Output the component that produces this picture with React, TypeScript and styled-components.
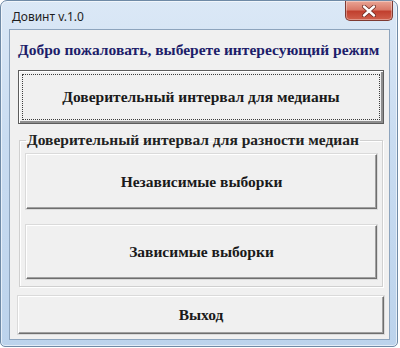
import styled, { createGlobalStyle, css } from "styled-components";

const GlobalStyle = createGlobalStyle`
  html, body {
    margin: 0;
    padding: 0;
    background: #ffffff;
  }
  * {
    box-sizing: border-box;
  }
`;

const Window = styled.div`
  width: 398px;
  height: 347px;
  display: flex;
  flex-direction: column;
  border: 1px solid #6f8aa6;
  border-radius: 7px 7px 5px 5px;
  background: linear-gradient(180deg, #dbe8f6 0%, #c9dcf1 40%, #bcd3ec 100%);
  box-shadow: inset 0 0 0 1px rgba(255, 255, 255, 0.6);
`;

const TitleBar = styled.div`
  height: 28px;
  flex-shrink: 0;
  display: flex;
  align-items: flex-start;
  justify-content: space-between;
  padding: 0 4px 0 11px;
`;

const Title = styled.span`
  margin-top: 7px;
  font-family: "Noto Sans", "Open Sans", sans-serif;
  font-size: 12px;
  color: #1e1e1e;
`;

const CloseButton = styled.div`
  width: 48px;
  height: 20px;
  display: flex;
  align-items: center;
  justify-content: center;
  border: 1px solid #7e3a32;
  border-top: none;
  border-radius: 0 0 5px 5px;
  background: linear-gradient(180deg, #e9a595 0%, #d97a69 45%, #c1402f 55%, #d0604c 100%);
  box-shadow: inset 0 0 0 1px rgba(255, 255, 255, 0.35);
`;

const Client = styled.div`
  flex: 1;
  margin: 0 7px 6px 8px;
  border: 1px solid #8da4bd;
  background: #f0f0f0;
  padding: 0 5px 0 8px;
  display: flex;
  flex-direction: column;
`;

const serif = css`
  font-family: "Liberation Serif", "Times New Roman", serif;
  font-weight: bold;
  font-size: 15.5px;
`;

const Heading = styled.div`
  ${serif}
  margin-top: 10px;
  height: 20px;
  line-height: 20px;
  color: #1d1d6a;
  white-space: nowrap;
`;

const Button = styled.button<{ $default?: boolean; $height: number }>`
  ${serif}
  position: relative;
  width: 100%;
  height: ${(p) => p.$height}px;
  flex-shrink: 0;
  margin: 0;
  padding: 0;
  background: #f0f0f0;
  border: 1px solid;
  border-color: #ffffff #6e6e6e #6e6e6e #ffffff;
  box-shadow: inset -1px -1px 0 #a0a0a0, 0 0 0 1px #dadada;
  color: #1a1a1a;
  cursor: pointer;

  ${(p) =>
    p.$default &&
    css`
      border-color: #5c5c5c;
      box-shadow: inset 1px 1px 0 #ffffff, inset -2px -2px 0 #8e8e8e;

      &::after {
        content: "";
        position: absolute;
        inset: 3px;
        border: 1px dotted #3c3c3c;
      }
    `}
`;

const FirstButton = styled(Button)`
  margin-top: 10px;
`;

const Group = styled.fieldset`
  margin: 7px 1px 0 1px;
  padding: 0 5px 7px 6px;
  border: 1px solid #d0d0d0;
  box-shadow: inset 1px 1px 0 #ffffff, 1px 1px 0 #ffffff;
`;

const Legend = styled.legend`
  ${serif}
  margin-left: 0;
  padding: 0 1px;
  line-height: 18px;
  color: #222222;
  white-space: nowrap;
`;

const GroupButtons = styled.div`
  margin-top: 5px;
  display: flex;
  flex-direction: column;
  gap: 16px;
`;

const ExitButton = styled(Button)`
  margin-top: 9px;
`;

const CloseIcon = () => (
  <svg width="14" height="12" viewBox="0 0 14 12">
    <path
      d="M2 1.5 L12 10.5 M12 1.5 L2 10.5"
      stroke="#6b2a22"
      strokeWidth="4"
      strokeLinecap="round"
    />
    <path
      d="M2 1.5 L12 10.5 M12 1.5 L2 10.5"
      stroke="#ffffff"
      strokeWidth="2.4"
      strokeLinecap="round"
    />
  </svg>
);

const App: React.FC = () => {
  return (
    <>
      <GlobalStyle />
      <Window>
        <TitleBar>
          <Title>Довинт v.1.0</Title>
          <CloseButton>
            <CloseIcon />
          </CloseButton>
        </TitleBar>
        <Client>
          <Heading>Добро пожаловать, выберете интересующий режим</Heading>
          <FirstButton $default $height={54}>
            Доверительный интервал для медианы
          </FirstButton>
          <Group>
            <Legend>Доверительный интервал для разности медиан</Legend>
            <GroupButtons>
              <Button $height={55}>Независимые выборки</Button>
              <Button $height={54}>Зависимые выборки</Button>
            </GroupButtons>
          </Group>
          <ExitButton $height={38}>Выход</ExitButton>
        </Client>
      </Window>
    </>
  );
};

export default App;
